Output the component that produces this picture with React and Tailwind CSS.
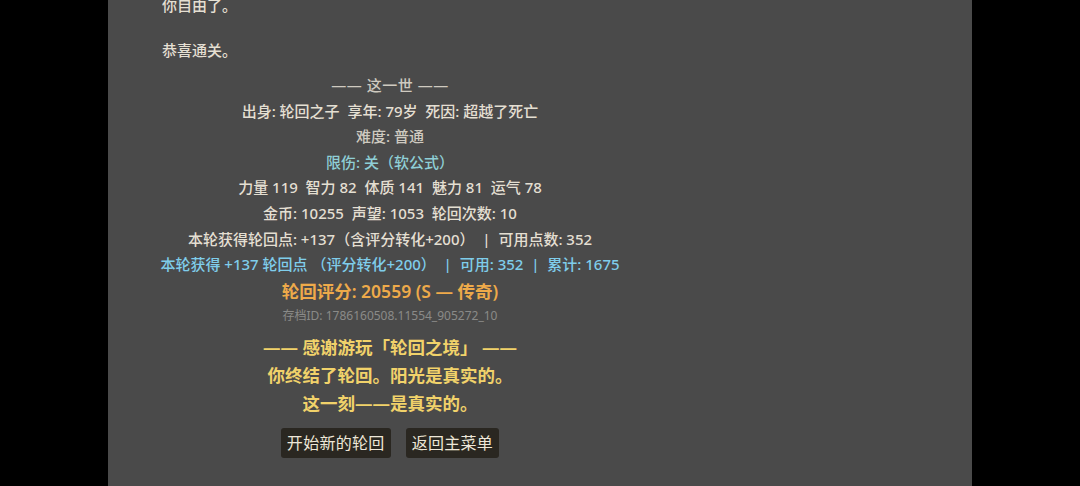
import React from "react";

const stats = [
  { text: "出身: 轮回之子  享年: 79岁  死因: 超越了死亡", tone: "text-[#e4dfd2]" },
  { text: "难度: 普通", tone: "text-[#cfcac0]" },
  { text: "限伤: 关（软公式）", tone: "text-[#8fcfd6]" },
  { text: "力量 119  智力 82  体质 141  魅力 81  运气 78", tone: "text-[#e4dfd2]" },
  { text: "金币: 10255  声望: 1053  轮回次数: 10", tone: "text-[#e4dfd2]" },
  { text: "本轮获得轮回点: +137（含评分转化+200）  |  可用点数: 352", tone: "text-[#e4dfd2]" },
  { text: "本轮获得 +137 轮回点 （评分转化+200）  |  可用: 352  |  累计: 1675", tone: "text-[#7fcdea]" },
];

const ending = [
  "—— 感谢游玩「轮回之境」 ——",
  "你终结了轮回。阳光是真实的。",
  "这一刻——是真实的。",
];

const EndButton = ({ children }) => (
  <button className="h-[30px] px-[6px] rounded-[3px] bg-[#2a2721] text-[#eee7d8] text-[16px] leading-[30px] tracking-[0.3px]">
    {children}
  </button>
);

export default function App() {
  return (
    <div className="w-[1080px] h-[486px] bg-black flex justify-center overflow-hidden font-['Noto_Sans','Noto_Sans_CJK_SC',sans-serif]">
      <div className="w-[864px] h-full bg-[#4a4a4a] px-[54px] overflow-hidden">
        <div className="-mt-[7px] flex flex-col">
          <p className="text-[15px] leading-[25px] text-[#e4dfd2] font-medium">你自由了。</p>
          <p className="mt-[20px] text-[15px] leading-[25px] text-[#e4dfd2] font-medium">恭喜通关。</p>

          <div className="mt-[10px] w-[456px] flex flex-col items-center text-center">
            <div className="text-[15px] leading-[25.6px] text-[#cfcac0] font-medium tracking-[0.5px]">—— 这一世 ——</div>
            {stats.map((s) => (
              <div key={s.text} className={`text-[15px] leading-[25.6px] whitespace-pre font-medium ${s.tone}`}>
                {s.text}
              </div>
            ))}
            <div className="text-[17.5px] leading-[27px] font-semibold text-[#eeaa4a]">
              轮回评分: 20559 (S — 传奇)
            </div>
            <div className="text-[12px] leading-[22px] text-[#8a8a88]">
              存档ID: 1786160508.11554_905272_10
            </div>
            <div className="mt-[6px] flex flex-col items-center">
              {ending.map((line) => (
                <div key={line} className="text-[17.5px] leading-[28px] font-semibold text-[#f1d26a] whitespace-pre">
                  {line}
                </div>
              ))}
            </div>
            <div className="mt-[11px] flex gap-[15px]">
              <EndButton>开始新的轮回</EndButton>
              <EndButton>返回主菜单</EndButton>
            </div>
          </div>
        </div>
      </div>
    </div>
  );
}
